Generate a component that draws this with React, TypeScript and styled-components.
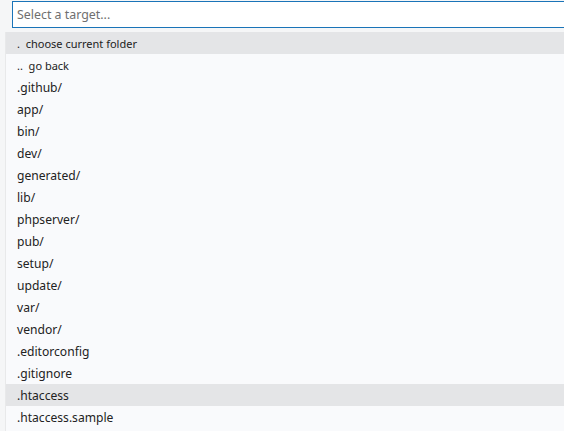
import React from "react";
import styled, { createGlobalStyle } from "styled-components";

const Global = createGlobalStyle`
  html, body { margin: 0; padding: 0; background: #f5f6f7; }
  body { font-family: "Noto Sans", "Open Sans", sans-serif; overflow: hidden; }
`;

const Page = styled.div`
  width: 564px;
  height: 431px;
  display: flex;
  flex-direction: column;
  background: #f5f6f7;
`;

const InputWrap = styled.div`
  padding: 1px 0 0 12px;
  height: 31px;
  box-sizing: border-box;
`;

const Input = styled.input`
  box-sizing: border-box;
  width: 560px;
  height: 27px;
  border: 1px solid #1a74b8;
  background: #ffffff;
  padding: 0 4px;
  font-family: "Noto Sans", sans-serif;
  font-size: 12.4px;
  color: #333;
  outline: none;
  &::placeholder { color: #6f6f6f; }
`;

const List = styled.ul`
  list-style: none;
  margin: 1px 0 0 5px;
  padding: 0;
  flex: 1;
  border-left: 1px solid #e8e9ea;
  background: #f9fafc;
`;

const Row = styled.li<{ $active?: boolean; $small?: boolean }>`
  height: 22px;
  display: flex;
  align-items: center;
  padding-left: 11px;
  font-size: ${(p) => (p.$small ? "11px" : "12.1px")};
  color: #222;
  background: ${(p) => (p.$active ? "#e4e5e7" : "transparent")};
  white-space: pre;
`;

const items = [
  { t: ".  choose current folder", small: true, active: true },
  { t: "..  go back", small: true },
  { t: ".github/" },
  { t: "app/" },
  { t: "bin/" },
  { t: "dev/" },
  { t: "generated/" },
  { t: "lib/" },
  { t: "phpserver/" },
  { t: "pub/" },
  { t: "setup/" },
  { t: "update/" },
  { t: "var/" },
  { t: "vendor/" },
  { t: ".editorconfig" },
  { t: ".gitignore" },
  { t: ".htaccess", active: true },
  { t: ".htaccess.sample" },
];

export default function App() {
  return (
    <Page>
      <Global />
      <InputWrap>
        <Input placeholder="Select a target..." />
      </InputWrap>
      <List>
        {items.map((it, i) => (
          <Row key={i} $active={it.active} $small={it.small}>
            {it.t}
          </Row>
        ))}
      </List>
    </Page>
  );
}
